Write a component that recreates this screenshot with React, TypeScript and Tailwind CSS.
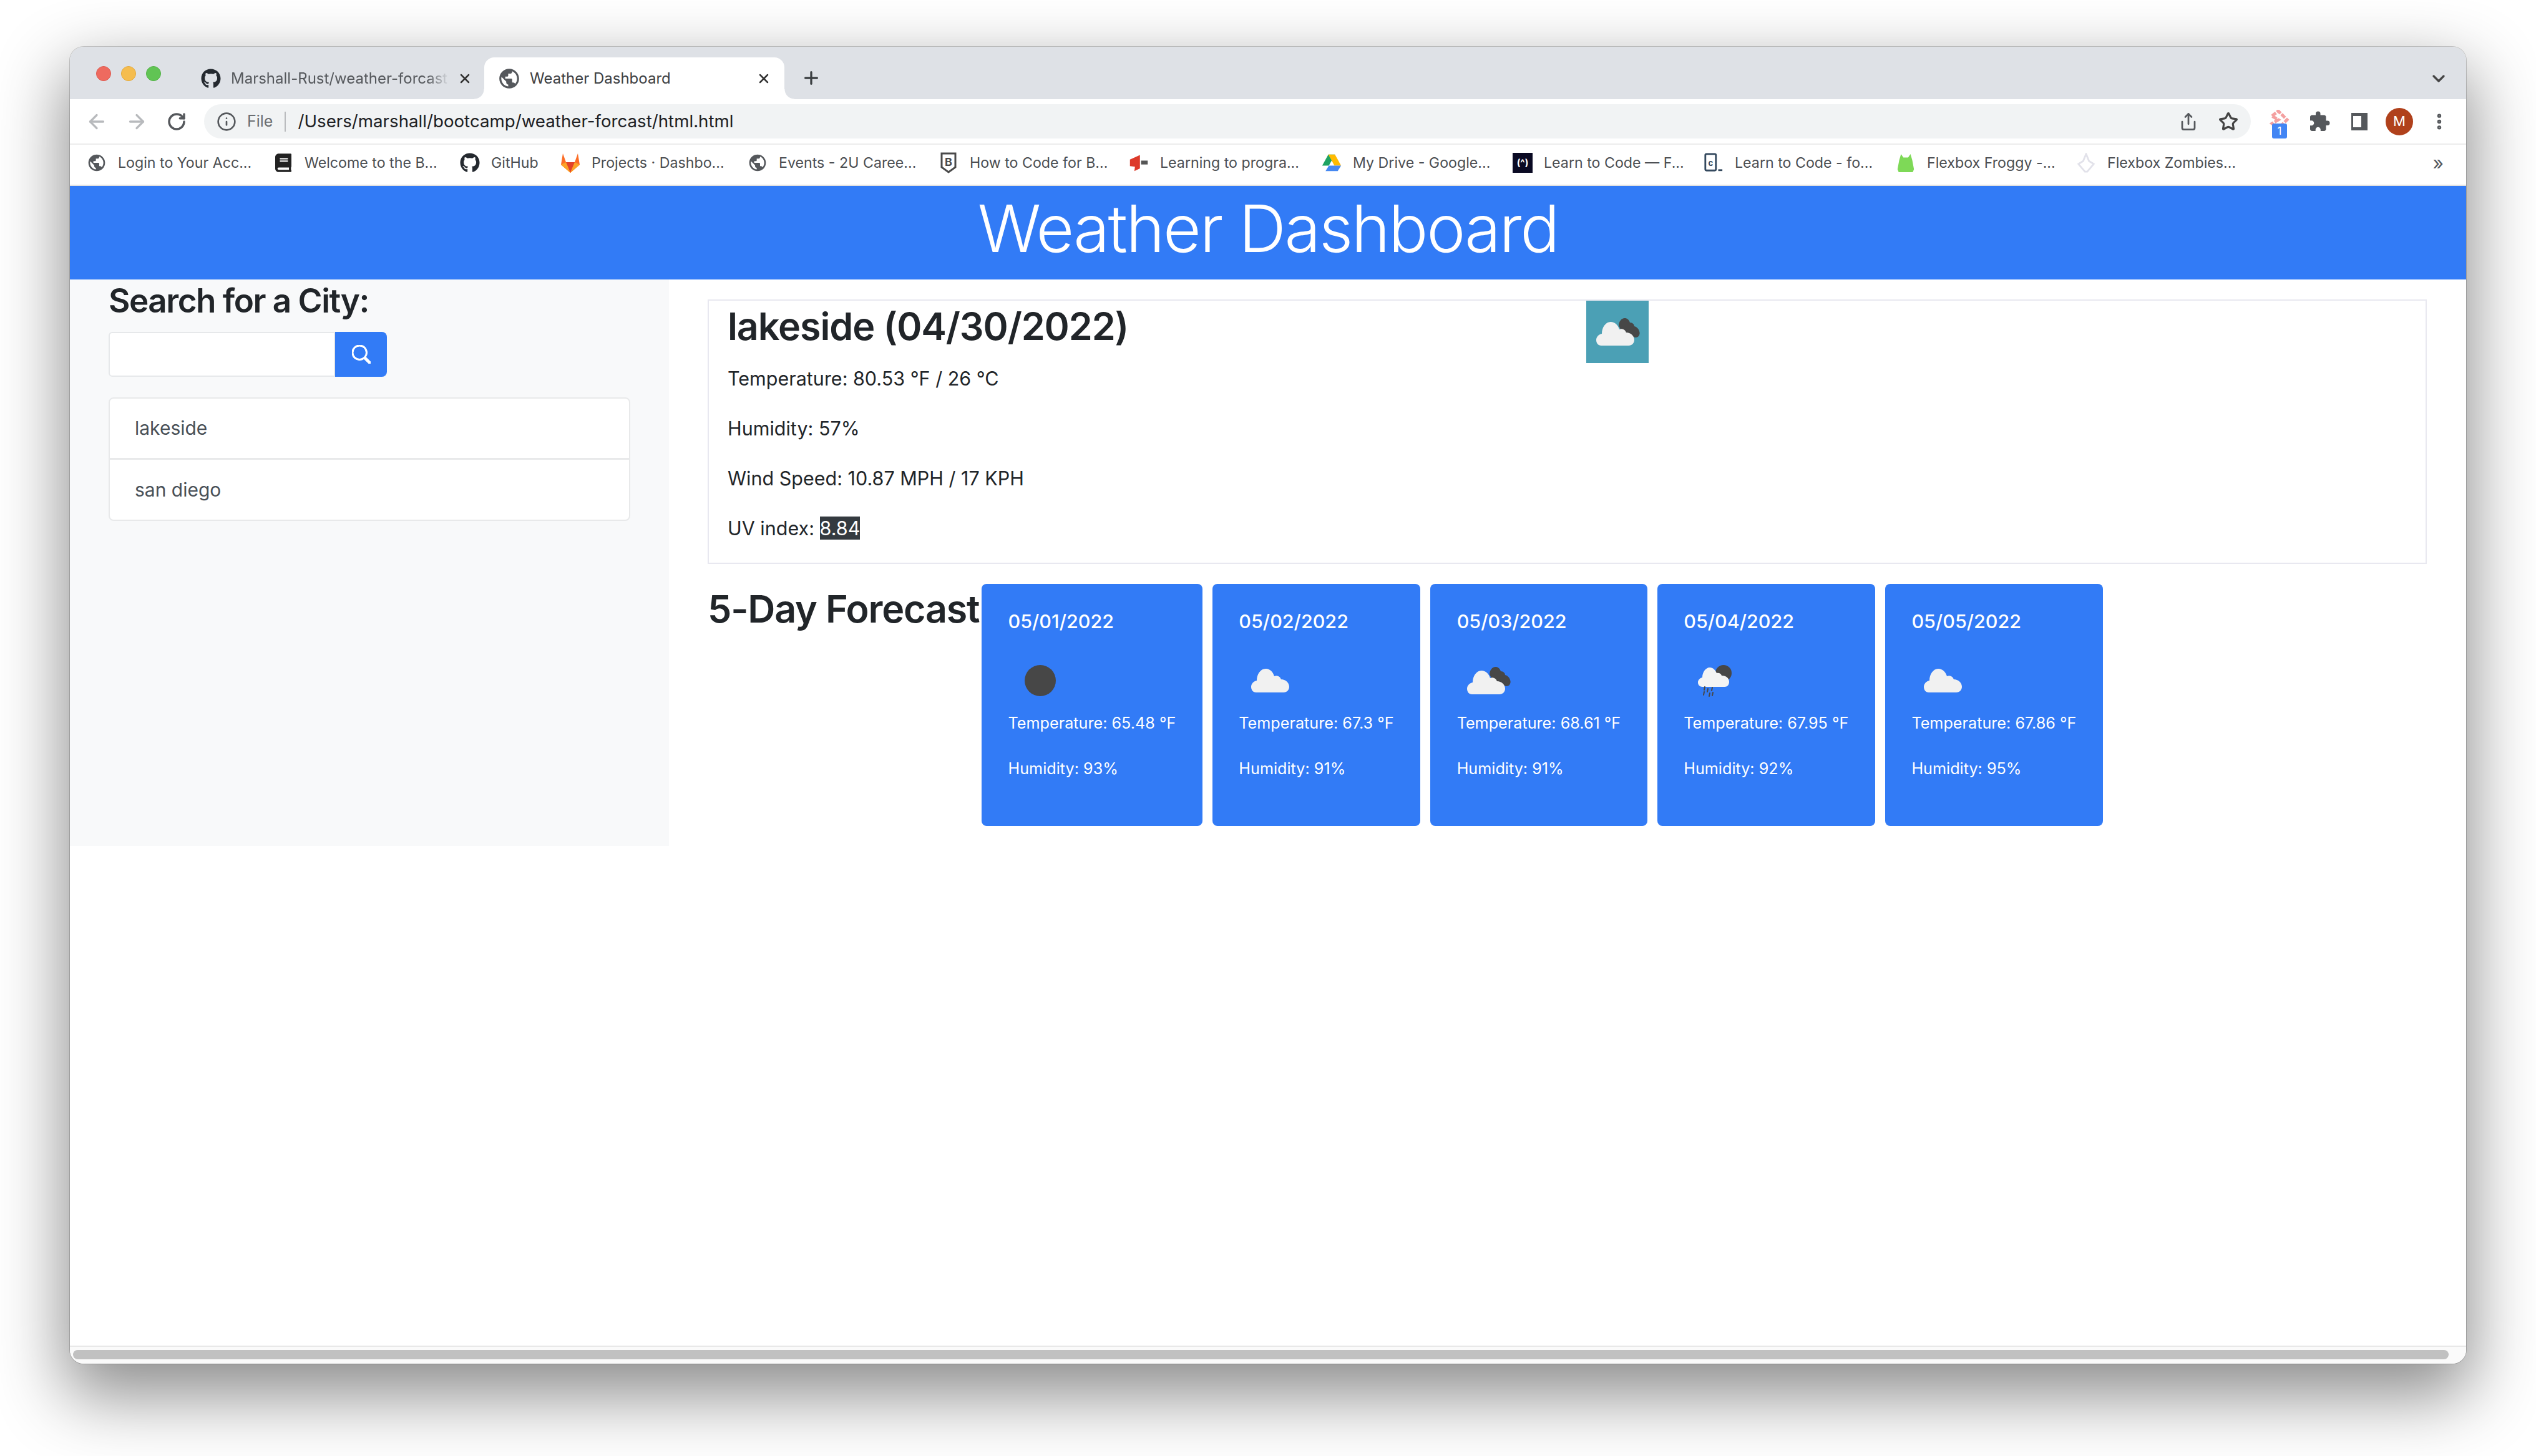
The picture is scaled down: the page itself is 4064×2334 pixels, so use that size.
import { ArrowLeft, ArrowRight, ChevronDown, Info, MoreVertical, Plus, RotateCw, Share, Star, X } from "lucide-react";
import { BsSearch } from "react-icons/bs";
import { FaBook, FaGithub } from "react-icons/fa";
import { MdExtension, MdPublic } from "react-icons/md";

const DarkCloud = () => (
  <path
    d="M52 40C52 33 57 27 63 28C67 29 69 32 70 35C74 35 77 38 77 41C81 42 84 45 85 49C87 54 84 59 79 59L60 56Z"
    fill="#474747"
  />
);

const WhiteCloud = ({ x = 0, y = 0 }: { x?: number; y?: number }) => (
  <path
    transform={`translate(${x} ${y})`}
    d="M28 69C23 69 20 65 20 60C20 55 24 51 29 50C29 40 35 31 43 31C50 31 55 36 57 43C62 41 66 43 68 48C75 48 81 53 81 60C81 65 77 69 72 69Z"
    fill="#f1f1f1"
  />
);

function WeatherIcon({ kind }: { kind: string }) {
  return (
    <svg viewBox="0 0 100 100" className="w-[100px] h-[100px] shrink-0">
      {kind === "moon" && <circle cx="51" cy="50" r="25" fill="#474747" />}
      {kind === "cloud" && <WhiteCloud />}
      {kind === "broken" && (
        <>
          <DarkCloud />
          <WhiteCloud x={-4} y={3} />
        </>
      )}
      {kind === "rain" && (
        <>
          <circle cx="64" cy="38" r="13" fill="#474747" />
          <path
            d="M30 60C26 60 23 57 23 53C23 49 26 46 30 45C30 37 35 29 42 29C47 29 51 33 53 38C57 37 60 39 61 42C68 42 73 46 73 52C73 57 70 60 66 60Z"
            fill="#f4f4f4"
          />
          <path
            d="M34 60L33 65M39 63L38 68M46 61L45 66M33 68L32 73M42 70L41 75M47 69L46 74"
            stroke="#474747"
            strokeWidth="2"
            strokeLinecap="round"
          />
        </>
      )}
    </svg>
  );
}

const GitlabIcon = () => (
  <svg viewBox="0 0 32 36" className="w-[32px] h-[36px]">
    <path d="M16 34L1 21L4 3L9 17H23L28 3L31 21Z" fill="#fc6d26" />
    <path d="M16 34L9 17H23Z" fill="#e24329" />
    <path d="M16 34L1 21L9 17ZM16 34L31 21L23 17Z" fill="#fca326" />
  </svg>
);

const ShieldIcon = () => (
  <svg viewBox="0 0 32 36" className="w-[32px] h-[36px]">
    <path d="M5 3H27V25L16 33L5 25Z" fill="none" stroke="#4a4a4a" strokeWidth="3" />
    <text x="16" y="23" textAnchor="middle" fontSize="18" fontWeight="700" fill="#4a4a4a" fontFamily="Inter">
      B
    </text>
  </svg>
);

const LearningIcon = () => (
  <svg viewBox="0 0 36 36" className="w-[32px] h-[32px]">
    <path d="M2 12L20 4V28L10 33L11 25L2 24Z" fill="#dd3a2a" />
    <path d="M22 14H34V21H22Z" fill="#555" />
  </svg>
);

const DriveIcon = () => (
  <svg viewBox="0 0 36 34" className="w-[34px] h-[34px]">
    <path d="M12 2H24L13 22H1Z" fill="#1ea362" />
    <path d="M12 2H24L35 22H23Z" fill="#ffba00" />
    <path d="M7 32L13 22H35L29 32Z" fill="#4688f1" />
  </svg>
);

const FreeCodeIcon = () => (
  <span className="w-[32px] h-[32px] bg-[#0a0a23] flex items-center justify-center text-white text-[15px] font-bold">
    (^)
  </span>
);

const CodeIcon = () => (
  <svg viewBox="0 0 34 36" className="w-[32px] h-[34px]">
    <rect x="3" y="3" width="18" height="28" rx="2" fill="none" stroke="#34495e" strokeWidth="3" />
    <text x="12" y="23" textAnchor="middle" fontSize="14" fontWeight="700" fill="#34495e" fontFamily="Inter">
      c
    </text>
    <rect x="25" y="29" width="7" height="3" fill="#34495e" />
  </svg>
);

const FrogIcon = () => (
  <svg viewBox="0 0 32 34" className="w-[32px] h-[32px]">
    <path d="M8 2L12 8H20L24 2L27 12L30 28L28 33H4L2 28L5 12Z" fill="#7ed957" />
  </svg>
);

const ZombieIcon = () => (
  <svg viewBox="0 0 32 34" className="w-[32px] h-[32px]">
    <path d="M16 2L21 14L29 19L18 32H14L3 19L11 14Z" fill="none" stroke="#e2e2ea" strokeWidth="3" />
  </svg>
);

const globe = <MdPublic className="w-[38px] h-[38px] text-[#55585c]" />;
const github = <FaGithub className="w-[32px] h-[32px] text-[#24292f]" />;

const bookmarks = [
  { label: "Login to Your Acc...", width: "w-[216px]", icon: globe },
  { label: "Welcome to the B...", width: "w-[216px]", icon: <FaBook className="w-[26px] h-[30px] text-[#222]" /> },
  { label: "GitHub", width: "w-[78px]", icon: github },
  { label: "Projects · Dashbo...", width: "w-[217px]", icon: <GitlabIcon /> },
  { label: "Events - 2U Caree...", width: "w-[223px]", icon: globe },
  { label: "How to Code for B...", width: "w-[222px]", icon: <ShieldIcon /> },
  { label: "Learning to progra...", width: "w-[226px]", icon: <LearningIcon /> },
  { label: "My Drive - Google...", width: "w-[223px]", icon: <DriveIcon /> },
  { label: "Learn to Code — F...", width: "w-[223px]", icon: <FreeCodeIcon /> },
  { label: "Learn to Code - fo...", width: "w-[225px]", icon: <CodeIcon /> },
  { label: "Flexbox Froggy -...", width: "w-[206px]", icon: <FrogIcon /> },
  { label: "Flexbox Zombies...", width: "w-[258px]", icon: <ZombieIcon /> },
];

const forecast = [
  { date: "05/01/2022", temp: "65.48", humidity: "93", icon: "moon" },
  { date: "05/02/2022", temp: "67.3", humidity: "91", icon: "cloud" },
  { date: "05/03/2022", temp: "68.61", humidity: "91", icon: "broken" },
  { date: "05/04/2022", temp: "67.95", humidity: "92", icon: "rain" },
  { date: "05/05/2022", temp: "67.86", humidity: "95", icon: "cloud" },
];

function TabStrip() {
  return (
    <div className="h-[84px] bg-[#dee1e6] flex items-start pl-[42px] shrink-0">
      <div className="flex gap-[16px] mt-[31px]">
        <span className="w-[24px] h-[24px] rounded-full bg-[#ee6a5f] border border-[#dd5a50]" />
        <span className="w-[24px] h-[24px] rounded-full bg-[#f5bd4f] border border-[#e3a93c]" />
        <span className="w-[24px] h-[24px] rounded-full bg-[#61c454] border border-[#52b146]" />
      </div>
      <div className="flex items-center ml-[64px] mt-[35px] w-[454px] h-[32px]">
        {github}
        <span className="ml-[16px] w-[350px] overflow-hidden whitespace-nowrap text-[24px] text-[#55585c] [mask-image:linear-gradient(to_right,black_90%,transparent)]">
          Marshall-Rust/weather-forcast
        </span>
        <X className="ml-[13px] w-[24px] h-[24px] text-[#333]" strokeWidth={2.5} />
      </div>
      <div className="relative self-end ml-[0px] w-[481px] h-[67px] bg-white rounded-t-[16px] flex items-center pl-[21px]">
        <span className="absolute left-[-16px] bottom-0 w-[16px] h-[16px] bg-[radial-gradient(circle_at_0_0,transparent_15px,white_16px)]" />
        <span className="absolute right-[-16px] bottom-0 w-[16px] h-[16px] bg-[radial-gradient(circle_at_100%_0,transparent_15px,white_16px)]" />
        {globe}
        <span className="ml-[14px] text-[24px] text-[#3c4043] whitespace-nowrap">Weather Dashboard</span>
        <X className="absolute right-[21px] w-[24px] h-[24px] text-[#333]" strokeWidth={2.5} />
      </div>
      <Plus className="ml-[27px] mt-[34px] w-[32px] h-[32px] text-[#3c4043]" strokeWidth={2.5} />
      <ChevronDown className="ml-auto mr-[28px] mt-[35px] w-[32px] h-[32px] text-[#444]" strokeWidth={2.5} />
    </div>
  );
}

function ToolSlot({ children }: { children: React.ReactNode }) {
  return <div className="relative w-[64px] h-[56px] flex items-center justify-center shrink-0">{children}</div>;
}

function Toolbar() {
  return (
    <div className="h-[73px] border-b-2 border-[#ececec] bg-white flex items-center pl-[11px] pr-[10px] shrink-0">
      <ToolSlot>
        <ArrowLeft className="w-[36px] h-[36px] text-[#b8babd]" strokeWidth={2.2} />
      </ToolSlot>
      <ToolSlot>
        <ArrowRight className="w-[36px] h-[36px] text-[#b8babd]" strokeWidth={2.2} />
      </ToolSlot>
      <ToolSlot>
        <RotateCw className="w-[32px] h-[32px] text-[#55585c]" strokeWidth={2.6} />
      </ToolSlot>
      <div className="ml-[12px] w-[3280px] h-[55px] rounded-full bg-[#f1f3f4] flex items-center pl-[20px] pr-[4px] shrink-0">
        <Info className="w-[32px] h-[32px] text-[#55585c]" strokeWidth={2} />
        <span className="ml-[17px] text-[25px] text-[#6a6d71]">File</span>
        <span className="ml-[19px] w-[2px] h-[32px] bg-[#b9bbbe]" />
        <span className="ml-[19px] text-[27.7px] text-[#202124] whitespace-nowrap">
          /Users/marshall/bootcamp/weather-forcast/html.html
        </span>
        <div className="ml-auto flex">
          <ToolSlot>
            <Share className="w-[30px] h-[34px] text-[#55585c]" strokeWidth={2.2} />
          </ToolSlot>
          <ToolSlot>
            <Star className="w-[32px] h-[32px] text-[#444]" strokeWidth={2.4} />
          </ToolSlot>
        </div>
      </div>
      <div className="ml-[14px] flex">
        <ToolSlot>
          <svg viewBox="0 0 32 32" className="w-[32px] h-[32px] -mt-[6px]">
            <path d="M4 10L14 2L28 16L14 30L4 22L14 16Z" fill="none" stroke="#f4a0a0" strokeWidth="5" strokeDasharray="8 2" />
          </svg>
          <span className="absolute left-[20px] bottom-[1px] w-[24px] h-[24px] rounded-[3px] bg-[#4285f4] text-white text-[17px] leading-[24px] text-center">
            1
          </span>
        </ToolSlot>
        <ToolSlot>
          <MdExtension className="w-[36px] h-[36px] text-[#55585c]" />
        </ToolSlot>
        <ToolSlot>
          <span className="w-[26px] h-[28px] border-[5px] border-l-[3px] border-r-[10px] border-[#55585c]" />
        </ToolSlot>
        <ToolSlot>
          <span className="w-[44px] h-[44px] rounded-full bg-[#b0411c] text-white text-[22px] flex items-center justify-center">
            M
          </span>
        </ToolSlot>
        <ToolSlot>
          <MoreVertical className="w-[32px] h-[32px] text-[#55585c]" strokeWidth={2.8} />
        </ToolSlot>
      </div>
    </div>
  );
}

function BookmarksBar() {
  return (
    <div className="h-[66px] pb-[6px] border-b-2 border-[#e2e2e2] bg-white flex items-center pl-[27px] pr-[36px] shrink-0">
      {bookmarks.map((b) => (
        <div key={b.label} className="flex items-center mr-[33px] shrink-0">
          <span className="w-[32px] h-[36px] flex items-center justify-center shrink-0">{b.icon}</span>
          <span className={`ml-[18px] ${b.width} whitespace-nowrap text-[23.2px] text-[#4b4e52]`}>{b.label}</span>
        </div>
      ))}
      <span className="ml-auto text-[30px] leading-none text-[#55585c]">»</span>
    </div>
  );
}

function Sidebar() {
  return (
    <aside className="w-[960px] h-[908px] bg-[#f8f9fa] pl-[62px] pr-[62px] shrink-0">
      <h3 className="text-[53px] leading-[64px] font-semibold tracking-[-1.5px] text-[#212529] mt-[2px] whitespace-nowrap">
        Search for a City:
      </h3>
      <div className="flex mt-[18px]">
        <input className="w-[363px] h-[72px] bg-white border-2 border-[#e6e8ea] rounded-l-[6px] outline-none" />
        <button className="w-[83px] h-[72px] bg-[#327bf6] rounded-r-[8px] flex items-center justify-center text-white">
          <BsSearch className="w-[30px] h-[30px] stroke-current stroke-[0.6px]" />
        </button>
      </div>
      <ul className="mt-[33px] w-[836px] flex flex-col">
        <li className="h-[99px] bg-white border-2 border-[#e8e9ea] rounded-t-[8px] flex items-center pl-[40px] text-[30px] text-[#495057]">
          lakeside
        </li>
        <li className="h-[100px] -mt-[1px] bg-white border-2 border-[#e8e9ea] rounded-b-[8px] flex items-center pl-[40px] text-[30px] text-[#495057]">
          san diego
        </li>
      </ul>
    </aside>
  );
}

function CurrentWeather() {
  return (
    <section className="flex h-[424px] border-2 border-[#e8e8f0]">
      <div className="w-[1406px] pl-[30px] shrink-0 text-[30.5px] text-[#212529]">
        <h2 className="text-[61px] leading-[72px] font-semibold tracking-[-1.1px] mt-[5px]">lakeside (04/30/2022)</h2>
        <p className="leading-[46px] mt-[25px]">Temperature: 80.53 °F / 26 °C</p>
        <p className="leading-[46px] mt-[34px]">Humidity: 57%</p>
        <p className="leading-[46px] mt-[34px]">Wind Speed: 10.87 MPH / 17 KPH</p>
        <p className="leading-[46px] mt-[34px]">
          UV index: <span className="bg-[#343a40] text-white">8.84</span>
        </p>
      </div>
      <div className="w-[100px] h-[100px] bg-[#4ba0b5] shrink-0">
        <WeatherIcon kind="broken" />
      </div>
    </section>
  );
}

function Forecast() {
  return (
    <section className="flex items-start mt-[32px]">
      <h3 className="w-[439px] text-[61px] leading-[72px] font-semibold tracking-[-1.2px] text-[#212529] whitespace-nowrap mt-[4px] shrink-0">
        5-Day Forecast
      </h3>
      <div className="flex gap-[16px]">
        {forecast.map((day) => (
          <div key={day.date} className="h-[388px] bg-[#327bf6] rounded-[8px] pt-[38px] px-[42.5px] text-white">
            <div className="text-[30.5px] leading-[44px] font-medium">{day.date}</div>
            <div className="mt-[23px]">
              <WeatherIcon kind={day.icon} />
            </div>
            <p className="text-[25.2px] leading-[36px] whitespace-nowrap">Temperature: {day.temp} °F</p>
            <p className="text-[25.2px] leading-[36px] mt-[37px] whitespace-nowrap">Humidity: {day.humidity}%</p>
          </div>
        ))}
      </div>
    </section>
  );
}

export default function App() {
  return (
    <div className="w-[4064px] h-[2334px] bg-white pl-[112px] pt-[75px] overflow-hidden font-['Inter',sans-serif]">
      <div className="relative w-[3840px] h-[2111px] rounded-[22px] bg-white flex flex-col overflow-hidden shadow-[0_44px_110px_8px_rgba(0,0,0,0.45),0_0_0_1px_rgba(0,0,0,0.18)]">
        <TabStrip />
        <Toolbar />
        <BookmarksBar />
        <header className="h-[150px] pb-[14px] bg-[#327bf6] flex items-center justify-center text-white text-[105px] tracking-[-2.3px] font-light shrink-0">
          Weather Dashboard
        </header>
        <div className="flex flex-1 min-h-0">
          <Sidebar />
          <main className="flex-1 pl-[62px] pr-[63px] pt-[32px]">
            <CurrentWeather />
            <Forecast />
          </main>
        </div>
        <div className="h-[29px] bg-[#fafafa] border-t-2 border-[#e8e8e8] pt-[5px] pl-[5px] shrink-0">
          <div className="w-[3807px] h-[15px] rounded-full bg-[#c1c1c1]" />
        </div>
      </div>
    </div>
  );
}
